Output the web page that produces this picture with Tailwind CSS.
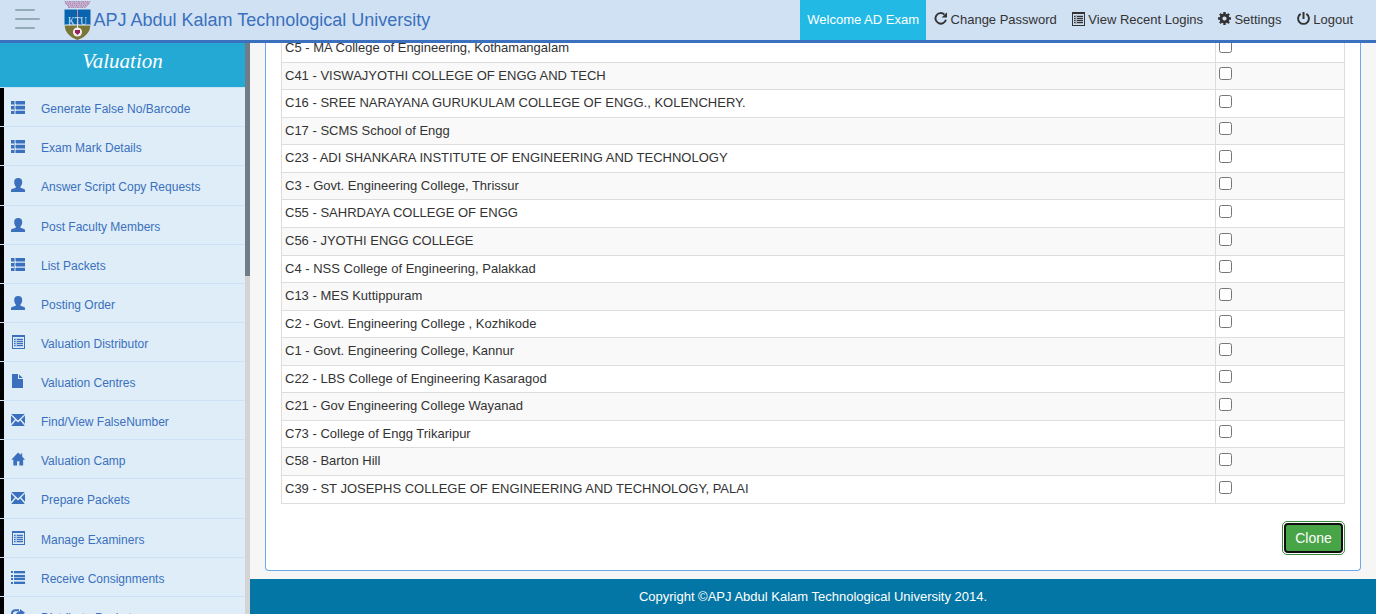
<!DOCTYPE html>
<html lang="en">
<head>
<meta charset="utf-8">
<title>APJ Abdul Kalam Technological University</title>
<script src="https://cdn.jsdelivr.net/npm/@tailwindcss/browser@4"></script>
</head>
<body class="h-[614px] overflow-hidden bg-[#f6f6f6] font-['Liberation_Sans',Arial,sans-serif] text-[13px] leading-[18.57px] text-[#333]">
<svg class="hidden">
  <symbol id="thlist" viewBox="0 0 14 14"><path d="M0 1h3v3H0zM5 1h9v3H5zM0 6h3v3H0zM5 6h9v3H5zM0 11h3v3H0zM5 11h9v3H5z"/><path opacity=".5" d="M0 4h3v1H0zM5 4h9v1.500H5zM0 9h3v1H0zM5 9h9v1.500H5zM3 1h1v13H3zM4 1h1v3H4zM4 6h1v3H4zM4 11h1v3H4z"/></symbol>
  <symbol id="user" viewBox="0 0 14 14"><path d="M7.200 0C9.900 0 11.200 1.500 11.200 3.900c0 2-.7 3.400-1.700 4.600v1.200l3.600 1.400c.6.300.9.700.9 1.300V14H0v-1.600c0-.6.300-1 .9-1.300l3.900-1.400V8.500C3.800 7.300 3.200 5.900 3.200 3.900 3.200 1.500 4.500 0 7.200 0z"/></symbol>
  <symbol id="listalt" viewBox="0 0 14 14"><path fill-rule="evenodd" d="M1 0h13v14H1zM2 2v11h11V2z"/><path opacity=".25" d="M3 3h9v9H3z"/><path d="M3 4h1.500v1H3zM6 4h6v1H6zM3 6h1.500v1H3zM6 6h6v1H6zM3 8h1.500v1H3zM6 8h6v1H6zM3 10h1.500v1H3zM6 10h6v1H6z"/></symbol>
  <symbol id="file" viewBox="0 0 14 14"><path d="M1 0h6v5h5v9H1zM8 0.500 11.800 4H8z"/></symbol>
  <symbol id="mail" viewBox="0 0 14 14"><path d="M.2 1h13.600L7 7.500zM0 2.600 3.900 6.500 0 10.700zM14 2.600v8.100l-3.900-4.200zM4.800 7.400 7 9.500l2.200-2.100 4.600 5.600H.2z"/></symbol>
  <symbol id="home" viewBox="0 0 15 14"><path d="M7.600 0l2.700 2.700V1H12v3.400L15 7.700H13V14H9V9.500H6.500V14H2.500V7.700H.3z"/></symbol>
  <symbol id="list" viewBox="0 0 14 14"><path d="M0 1h2v2H0zM3 1h11v2H3zM0 5h2v2H0zM3 5h11v2H3zM0 8h2v2H0zM3 8h11v2H3zM0 12h2v2H0zM3 12h11v2H3z"/><path opacity=".35" d="M3 3h11v1H3zM3 7h11v1H3zM3 11h11v1H3z"/></symbol>
  <symbol id="share" viewBox="0 0 14 14"><path fill="none" stroke="currentColor" stroke-width="2" d="M8 1.200H4.500C2.500 1.200 1 2.700 1 4.700v4.500C1 11 2.500 12.500 4.500 12.500h4c2 0 3-1.500 3-3"/><path d="M9 0l5 3.700-5 3.800V5.200C7 5.200 5.600 6 4.500 7.700 4.600 4.500 6.200 2.600 9 2.300z"/></symbol>
  <symbol id="repeat" viewBox="0 0 14 14"><path fill="none" stroke="currentColor" stroke-width="1.900" d="M10.400 2.500A5.300 5.300 0 1 0 11.900 7.700"/><path d="M13 .2V5.500H7.700z"/></symbol>
  <symbol id="cog" viewBox="0 0 14 14"><circle cx="6.500" cy="6.500" r="3.500" fill="none" stroke="currentColor" stroke-width="2.800"/><path fill="none" stroke="currentColor" stroke-width="2.400" d="M6.500 0v2.400M6.500 10.600V13M0 6.500h2.400M10.600 6.500H13M1.900 1.900l1.600 1.600M9.500 9.500l1.600 1.600M1.900 11.100l1.600-1.600M9.500 3.500l1.600-1.600"/></symbol>
  <symbol id="off" viewBox="0 0 14 14"><path fill="none" stroke="currentColor" stroke-width="1.900" d="M3.700 1.900a5.400 5.400 0 1 0 5.600 0"/><path d="M5.500 0h2v7H5.500z"/></symbol>
</svg>

<header class="flex h-[43px] items-start border-b-[3px] border-[#3a70bd] bg-[#d0e1f3]">
  <div class="mt-[9px] ml-[15px] flex w-[25px] flex-col gap-[7px]">
    <i class="h-[2px] w-5 rounded bg-[#93aab9]"></i><i class="h-[2px] w-[25px] rounded bg-[#93aab9]"></i><i class="h-[2px] w-5 rounded bg-[#93aab9]"></i>
  </div>
  <svg class="ml-6 h-10 w-[27px]" viewBox="0 0 27 40">
    <g fill="none" stroke="#b088b0" stroke-dasharray="2 .7 1.200 .5"><path d="M.5 1.500h26M1 3.500h25M3 5.500h21M4 7.500h18"/></g>
    <path fill="none" stroke="#c3a9cb" d="M1 2.500h25M2 4.500h23M4 6.500h19"/>
    <path fill="#0864ae" d="M.5 9.500h26V25H.5z"/>
    <path fill="#7a7636" d="M.7 25h25.600c0 7-4.800 12-12.800 15C5.500 37 .7 32 .7 25z"/>
    <circle cx="13.500" cy="32" r="4.600" fill="#f2ecec"/><path fill="#97205e" d="M11 30h5v2.500L13.500 35 11 32.500z"/>
    <path fill="#e8edf5" d="M13 9.500h1V28h-1zM.5 24.500h26v1H.5z"/>
    <path fill="#a32a62" d="M13.500 10h.7v15h-.7z"/>
    <text x="4" y="25" font-family="Liberation Serif" font-size="11.500" textLength="19" lengthAdjust="spacingAndGlyphs" fill="#d8e8f7">KTU</text>
  </svg>
  <h1 class="ml-[2.500px] text-[18px] leading-10 whitespace-nowrap text-[#3a70bd]">APJ Abdul Kalam Technological University</h1>
  <nav class="mr-[23px] ml-auto flex leading-10 whitespace-nowrap">
    <span class="mr-[7.600px] w-[126px] bg-[#22bae5] pl-[7.300px] text-white">Welcome AD Exam</span>
    <span class="flex w-[138.500px]"><svg class="mt-3 mr-[3px] size-[14px] fill-current"><use href="#repeat"/></svg>Change Password</span>
    <span class="flex w-[145.800px]"><svg class="mt-3 -ml-[.7px] mr-[3px] size-[14px] fill-current"><use href="#listalt"/></svg>View Recent Logins</span>
    <span class="flex w-[78.800px]"><svg class="mt-3 mr-[2.600px] size-[14px] fill-current"><use href="#cog"/></svg>Settings</span>
    <span class="flex"><svg class="mt-3 mr-[2.600px] size-[14px] fill-current"><use href="#off"/></svg>Logout</span>
  </nav>
</header>

<div class="flex h-[571px]">
  <aside class="flex w-[250px] overflow-hidden bg-[#dfedf8]">
    <div class="w-[245px]">
      <h2 class="h-11 bg-[#23a9d3] text-center font-['Liberation_Serif',serif] text-[21px] leading-9 text-white italic">Valuation</h2>
      <ul id="menu" class="border-t border-[#cfe1f5] pt-[0.200px] text-[12px] leading-[17.140px] text-[#3a70bd]"></ul>
    </div>
    <div class="w-[5px] bg-[#d4d4d4]"><div class="h-[233px] bg-[#6f7d88]"></div></div>
  </aside>
  <div class="flex min-w-0 flex-1 flex-col">
    <main class="mx-[15px] h-[528px] rounded-b-[4px] border border-t-0 border-[#6ba8ee] bg-white px-[15px]">
      <div class="h-[461px] overflow-hidden">
        <div id="rows" class="-mt-[8px] border-x border-[#ddd]"></div>
      </div>
      <div class="mt-[17px] flex justify-end">
        <button class="h-[34px] w-[63px] rounded-[5px] border border-[#3c8a3f] bg-white p-px"><span class="block h-[30px] rounded-[4px] border-2 border-[#101010] bg-[#47a447] text-[14px] leading-[27px] text-white">Clone</span></button>
      </div>
    </main>
    <footer class="mt-2 flex-1 bg-[#0376a6] pt-[9px] text-center text-white">Copyright ©APJ Abdul Kalam Technological University 2014.</footer>
  </div>
</div>
<script>
const items = [['thlist','Generate False No/Barcode'],['thlist','Exam Mark Details'],['user','Answer Script Copy Requests'],['user','Post Faculty Members'],['thlist','List Packets'],['user','Posting Order'],['listalt','Valuation Distributor'],['file','Valuation Centres'],['mail','Find/View FalseNumber'],['home','Valuation Camp'],['mail','Prepare Packets'],['listalt','Manage Examiners'],['list','Receive Consignments'],['share','Distribute Packets']];
document.getElementById('menu').innerHTML = items.map(([icon, label]) => `<li class="flex h-[39.140px] border-b border-[#cfe1f5]"><span class="w-1 bg-black"></span><svg class="mt-[12px] ml-[7px] size-[14px] overflow-visible fill-current"><use href="#${icon}"/></svg><span class="mt-[13px] ml-4">${label}</span></li>`).join('');
const colleges = ['C5 - MA College of Engineering, Kothamangalam','C41 - VISWAJYOTHI COLLEGE OF ENGG AND TECH','C16 - SREE NARAYANA GURUKULAM COLLEGE OF ENGG., KOLENCHERY.','C17 - SCMS School of Engg','C23 - ADI SHANKARA INSTITUTE OF ENGINEERING AND TECHNOLOGY','C3 - Govt. Engineering College, Thrissur','C55 - SAHRDAYA COLLEGE OF ENGG','C56 - JYOTHI ENGG COLLEGE','C4 - NSS College of Engineering, Palakkad','C13 - MES Kuttippuram','C2 - Govt. Engineering College , Kozhikode','C1 - Govt. Engineering College, Kannur','C22 - LBS College of Engineering Kasaragod','C21 - Gov Engineering College Wayanad','C73 - College of Engg Trikaripur','C58 - Barton Hill','C39 - ST JOSEPHS COLLEGE OF ENGINEERING AND TECHNOLOGY, PALAI'];
document.getElementById('rows').innerHTML = colleges.map(c => `<div class="flex h-[27.570px] border-b border-[#ddd] bg-white even:bg-[#f9f9f9]"><span class="w-[934px] border-r border-[#ddd] pt-[4.050px] pl-[3px]">${c}</span><input type="checkbox" class="mt-[4.600px] ml-[3px] size-[13px]"></div>`).join('');
</script>
</body>
</html>
